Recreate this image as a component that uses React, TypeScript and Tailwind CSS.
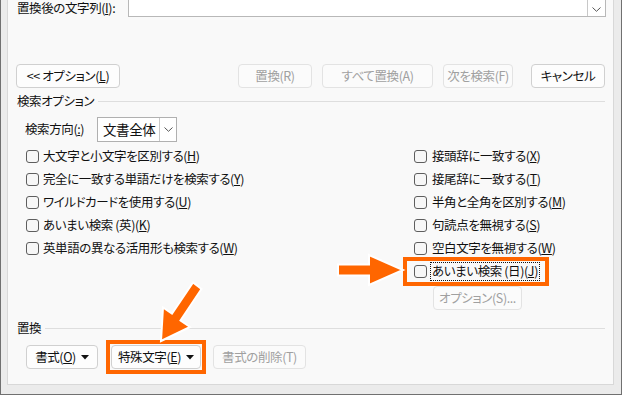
import type { ReactNode } from "react";

const LEFT_OPTS: [string, string, string][] = [
  ["大文字と小文字を区別する(", "H", ")"],
  ["完全に一致する単語だけを検索する(", "Y", ")"],
  ["ワイルドカードを使用する(", "U", ")"],
  ["あいまい検索 (英)(", "K", ")"],
  ["英単語の異なる活用形も検索する(", "W", ")"],
];

const RIGHT_OPTS: [string, string, string][] = [
  ["接頭辞に一致する(", "X", ")"],
  ["接尾辞に一致する(", "T", ")"],
  ["半角と全角を区別する(", "M", ")"],
  ["句読点を無視する(", "S", ")"],
  ["空白文字を無視する(", "W", ")"],
];

function Btn({
  children,
  disabled,
  className = "",
}: {
  children: ReactNode;
  disabled?: boolean;
  className?: string;
}) {
  return (
    <div
      className={
        "flex h-[24px] shrink-0 items-center justify-center rounded-[4px] border " +
        (disabled
          ? "border-[#e3e3e3] bg-[#fbfbfb] text-[#a0a0a0] "
          : "border-[#d0d0d0] bg-[#fdfdfd] text-[#111] ") +
        className
      }
    >
      {children}
    </div>
  );
}

function Box() {
  return <span className="h-[13px] w-[13px] shrink-0 rounded-[3px] border border-[#5e5e5e] bg-[#f7f7f7]" />;
}

function Opt({ o, gap = "gap-[4px]" }: { o: [string, string, string]; gap?: string }) {
  return (
    <div className={"flex h-[23px] items-center " + gap}>
      <Box />
      <span className="whitespace-nowrap">
        {o[0]}
        <u>{o[1]}</u>
        {o[2]}
      </span>
    </div>
  );
}

function Caret() {
  return (
    <svg width="8" height="5" viewBox="0 0 8 5" className="ml-[5px]">
      <path d="M0 0h8L4 4.5z" fill="#111" />
    </svg>
  );
}

function Chevron() {
  return (
    <svg width="9" height="5" viewBox="0 0 9 5">
      <path d="M0.5 0.5L4.5 4.3L8.5 0.5" fill="none" stroke="#555" strokeWidth="1" />
    </svg>
  );
}

function Group({ label }: { label: string }) {
  return (
    <div className="flex h-[14px] items-center pl-[9px] pr-[8px]">
      <span className="whitespace-nowrap">{label}</span>
      <div className="ml-[4px] h-px flex-1 bg-[#dedede]" />
    </div>
  );
}

export default function App() {
  return (
    <div className="relative h-[395px] w-[622px] overflow-hidden border-x border-b border-[#707070] bg-[#ebebeb] pb-[9px] pl-[6px] pr-[7px] font-['Noto_Sans_CJK_JP','Noto_Sans',sans-serif] text-[12.5px] leading-none tracking-[-0.4px] text-[#111] [font-feature-settings:'palt']">
      <div className="flex h-full flex-col border-x border-b border-[#d8d8d8] bg-[#f9f9f9]">
        {/* 置換後の文字列 */}
        <div className="-mt-[7px] flex h-[24px] items-start pl-[9px] pr-[7px]">
          <span className="mt-[9px] whitespace-nowrap">
            置換後の文字列(<u>I</u>):
          </span>
          <div className="ml-auto flex h-full w-[478px] border border-[#b8b8b8] bg-white">
            <div className="ml-auto flex w-[18px] items-center justify-center border-l border-[#c8c8c8] pt-[8px]">
              <Chevron />
            </div>
          </div>
        </div>

        {/* buttons */}
        <div className="mt-[47px] flex items-center pl-[8px] pr-[8px]">
          <Btn className="w-[104px]">
            &lt;&lt;&nbsp;オプション(<u>L</u>)
          </Btn>
          <Btn disabled className="ml-[118px] w-[74px]">
            置換(R)
          </Btn>
          <Btn disabled className="ml-[10px] w-[111px]">
            すべて置換(A)
          </Btn>
          <Btn disabled className="ml-[10px] w-[70px]">
            次を検索(F)
          </Btn>
          <Btn className="ml-auto w-[74px]">キャンセル</Btn>
        </div>

        <div className="mt-[6px]">
          <Group label="検索オプション" />
        </div>

        {/* 検索方向 */}
        <div className="mt-[9px] flex h-[25px] items-center pl-[17px]">
          <span className="w-[72px] whitespace-nowrap">
            検索方向(<u>:</u>)
          </span>
          <div className="flex h-full w-[80px] border border-[#b0b0b0] bg-white">
            <span className="flex flex-1 items-center pl-[5px] text-[13.5px]">文書全体</span>
            <div className="flex w-[17px] items-center justify-center border-l border-[#c8c8c8]">
              <Chevron />
            </div>
          </div>
        </div>

        {/* options */}
        <div className="mt-[3px] flex pl-[18px]">
          <div className="flex w-[388px] flex-col">
            {LEFT_OPTS.map((o) => (
              <Opt key={o[0]} o={o} />
            ))}
          </div>
          <div className="flex flex-col">
            {RIGHT_OPTS.map((o) => (
              <Opt key={o[0]} o={o} gap="gap-[5px]" />
            ))}
            <div className="-my-[3px] -ml-[11px] flex h-[29px] w-[146px] items-center gap-[3px] border-[4px] border-[#ff6600] bg-[#f9f9f9] pl-[7px]">
              <Box />
              <span className="whitespace-nowrap border border-dotted border-[#111] px-[1px] py-[2px]">
                あいまい検索 (日)(<u>J</u>)
              </span>
            </div>
            <Btn disabled className="ml-[19px] mt-[3px] h-[23px] w-[89px]">
              オプション(S)...
            </Btn>
          </div>
        </div>

        <div className="mt-[11px]">
          <Group label="置換" />
        </div>

        {/* 置換 buttons */}
        <div className="mt-[10px] flex items-center pl-[18px]">
          <Btn className="h-[23px] w-[72px]">
            書式(<u>O</u>)
            <Caret />
          </Btn>
          <div className="-my-[5px] ml-[8px] border-[4px] border-[#ff6600] bg-[#f9f9f9] px-[1px] py-[1px]">
            <Btn className="h-[23px] w-[90px]">
              特殊文字(<u>E</u>)
              <Caret />
            </Btn>
          </div>
          <Btn disabled className="ml-[7px] h-[23px] w-[93px]">
            書式の削除(T)
          </Btn>
        </div>
      </div>

      {/* arrows */}
      <svg className="pointer-events-none absolute left-0 top-0" width="622" height="395">
        <polygon
          points="337,264.5 368,264.5 368,255 402,270 368,285 368,275.5 337,275.5"
          fill="#ff6600"
          stroke="#ffffff"
          strokeWidth="2"
        />
        <polygon
          points="200.5,289 179.5,320.5 189,327 160,341 162,307.5 171,313.5 192,282.5"
          fill="#ff6600"
          stroke="#ffffff"
          strokeWidth="2"
        />
      </svg>
    </div>
  );
}
